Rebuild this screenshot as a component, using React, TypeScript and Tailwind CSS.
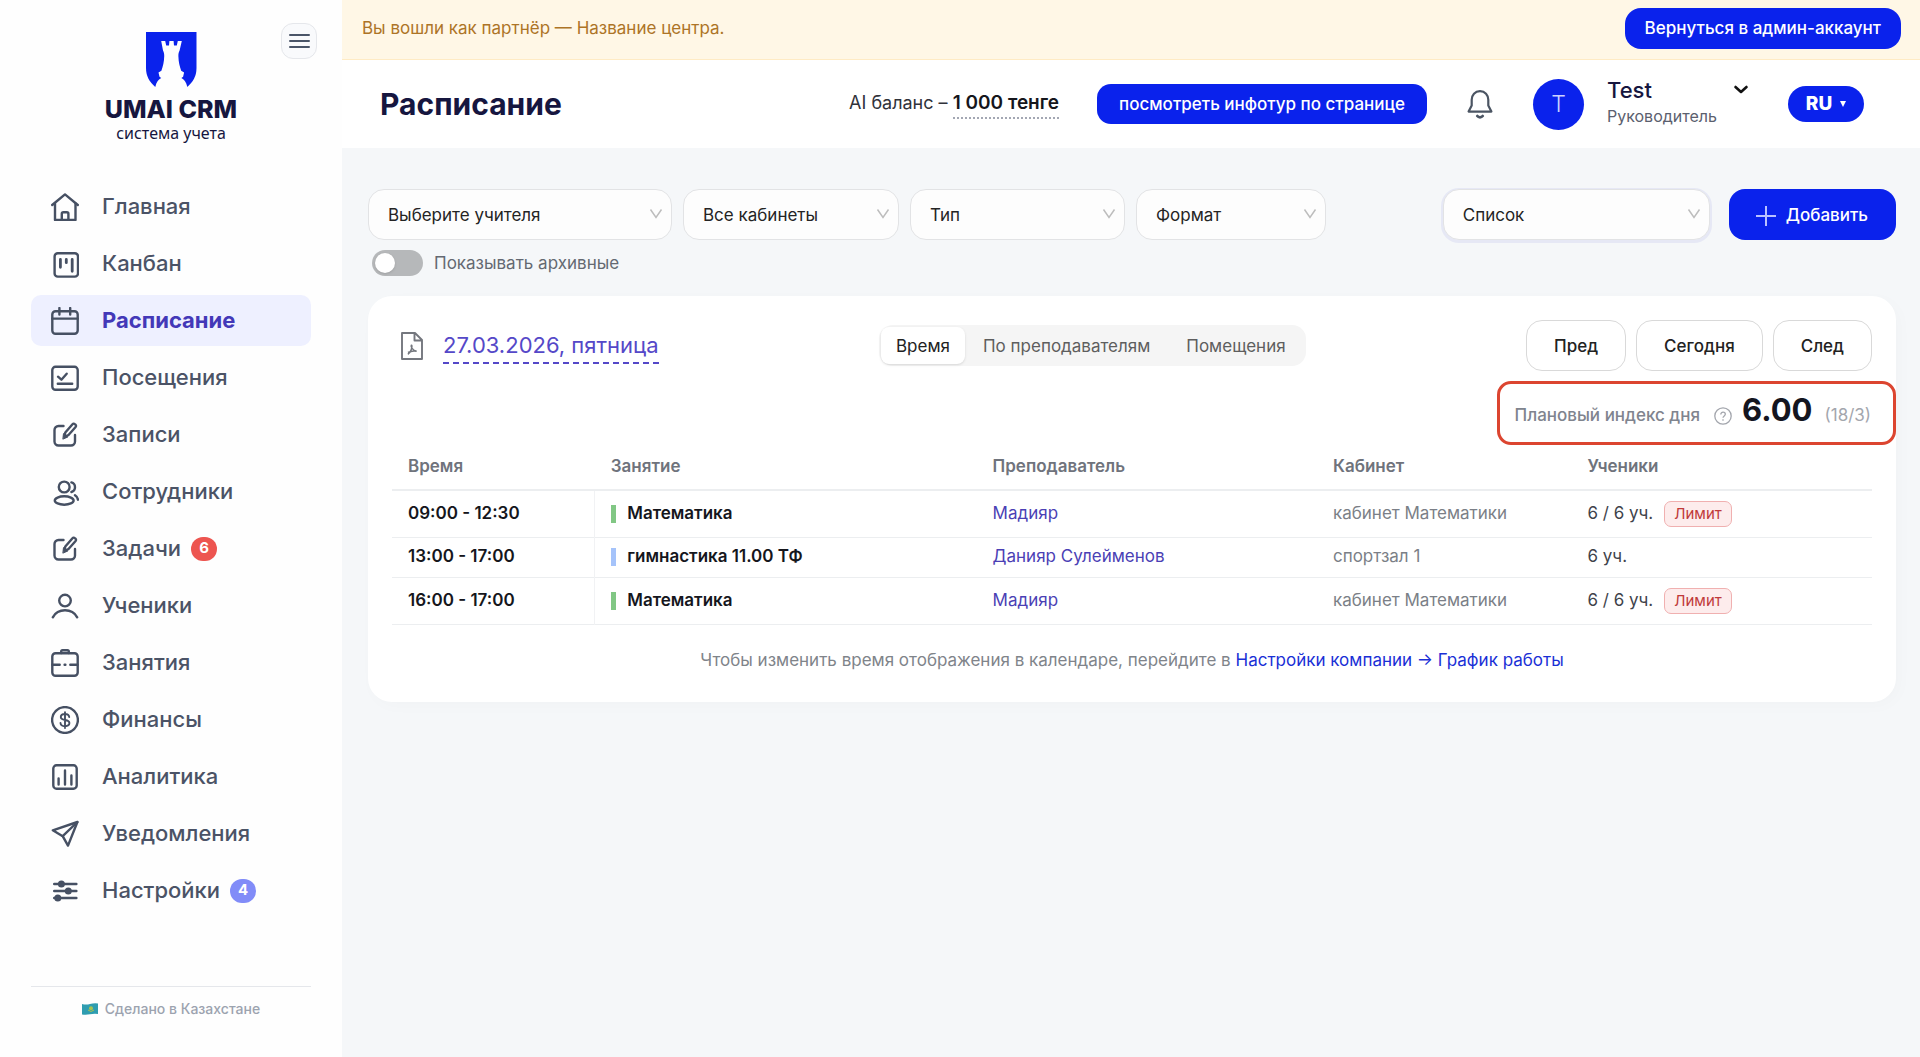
import { useState, type ReactNode } from "react";
import clsx from "clsx";

interface NavItem {
  label: string;
  icon: ReactNode;
  badge?: number;
  badgeClass?: string;
}

interface Lesson {
  time: string;
  title: string;
  color: string;
  teacher: string;
  room: string;
  students: string;
  limit: boolean;
}

const editIcon = (
  <>
    <path d="M12.5 5H7.5a4 4 0 0 0-4 4v11.5a4 4 0 0 0 4 4H20a4 4 0 0 0 4-4V14" />
    <path d="m13.3 15.8 1-4.3 7.2-8.3a1.6 1.6 0 0 1 2.3-.1l.7.6a1.6 1.6 0 0 1 .1 2.3l-7.3 8.2Z" />
    <path d="m12.8 12.8 4 3.2-4.6 2Z" fill="currentColor" strokeWidth="1" />
  </>
);

const navItems: NavItem[] = [
  {
    label: "Главная",
    icon: (
      <>
        <path d="M1.2 12 14 1.4 26.8 12" />
        <path d="M4 10.5V27h20.5V10.5" />
        <path d="M10.8 27v-6.2a1.6 1.6 0 0 1 1.6-1.6h3.4a1.6 1.6 0 0 1 1.6 1.6V27" />
      </>
    ),
  },
  {
    label: "Канбан",
    icon: (
      <>
        <rect x="3.6" y="3.2" width="23.4" height="23.4" rx="3.2" />
        <path d="M9.4 9.5v7.8M15.3 9.5v3.2M21.2 9.5v11.8" strokeWidth="2.8" />
      </>
    ),
  },
  {
    label: "Расписание",
    icon: (
      <>
        <rect x="1.3" y="4.2" width="25.4" height="22.6" rx="3.2" />
        <path d="M1.3 11.6h25.4M8.4 1v6.5M19.2 1v6.5" />
      </>
    ),
  },
  {
    label: "Посещения",
    icon: (
      <>
        <rect x="1.3" y="2.8" width="25.4" height="23" rx="3.2" />
        <path d="m7 12.7 3.4 3 5.3-6M6.8 19.8h14.4" />
      </>
    ),
  },
  { label: "Записи", icon: editIcon },
  {
    label: "Сотрудники",
    icon: (
      <>
        <circle cx="13.2" cy="9" r="5.4" />
        <ellipse cx="13.2" cy="22.5" rx="9.4" ry="4.2" />
        <path d="M20.4 4.4a5 5 0 0 1 0 9.6M24 17.2c2 1.3 2.8 2.6 2.9 4.5" />
      </>
    ),
  },
  { label: "Задачи", icon: editIcon, badge: 6, badgeClass: "bg-[#ed5550]" },
  {
    label: "Ученики",
    icon: (
      <>
        <circle cx="14" cy="8.6" r="5.8" />
        <path d="M1.8 25.3c2.6-4.7 7-7 12.2-7s9.6 2.3 12.2 7" />
      </>
    ),
  },
  {
    label: "Занятия",
    icon: (
      <>
        <rect x="1.3" y="4.2" width="25.4" height="22.6" rx="3.2" />
        <path d="M10.2 4V2.5c0-.8.5-1.3 1.3-1.3h5c.8 0 1.3.5 1.3 1.3V4" />
        <path d="M1.5 15.8h7.2M13.6 15.8h.8M19.3 15.8h7.2" />
      </>
    ),
  },
  {
    label: "Финансы",
    icon: (
      <>
        <circle cx="14" cy="14" r="12.9" />
        <path
          d="M18.2 11c-.2-1.9-1.8-3-4.2-3s-4.2 1.1-4.2 3c0 1.8 1.4 2.5 4.2 3s4.4 1.3 4.4 3.1c0 1.9-1.8 3.1-4.4 3.1s-4.4-1.2-4.5-3.2M14 6.2v15.8"
          strokeWidth="1.9"
        />
      </>
    ),
  },
  {
    label: "Аналитика",
    icon: (
      <>
        <rect x="2.3" y="2.3" width="23.4" height="23.4" rx="3.2" />
        <path d="M7.6 15.5v6M14 7.5v14M20.4 12.5v9" />
      </>
    ),
  },
  {
    label: "Уведомления",
    icon: (
      <>
        <path d="M26.4 2 1.8 10.3l9.9 5.9L17 25.6Z" />
        <path d="M26.4 2 11.7 16.2" />
      </>
    ),
  },
  {
    label: "Настройки",
    badge: 4,
    badgeClass: "bg-[#818cf8]",
    icon: (
      <>
        <path d="M3.2 7h22.2M3.2 14h22.2M3.2 21h22.2" />
        <g fill="currentColor" stroke="none">
          <circle cx="10.4" cy="7" r="3.5" />
          <circle cx="17.3" cy="14" r="3.5" />
          <circle cx="6.8" cy="21" r="3.5" />
        </g>
      </>
    ),
  },
];

const lessons: Lesson[] = [
  {
    time: "09:00 - 12:30",
    title: "Математика",
    color: "bg-[#81c784]",
    teacher: "Мадияр",
    room: "кабинет Математики",
    students: "6 / 6 уч.",
    limit: true,
  },
  {
    time: "13:00 - 17:00",
    title: "гимнастика 11.00 ТФ",
    color: "bg-[#a5c3fa]",
    teacher: "Данияр Сулейменов",
    room: "спортзал 1",
    students: "6 уч.",
    limit: false,
  },
  {
    time: "16:00 - 17:00",
    title: "Математика",
    color: "bg-[#81c784]",
    teacher: "Мадияр",
    room: "кабинет Математики",
    students: "6 / 6 уч.",
    limit: true,
  },
];

const views = ["Время", "По преподавателям", "Помещения"];

function Logo() {
  return (
    <div className="flex flex-col items-center text-[#16163f]">
      <svg width="51" height="55" viewBox="0 0 51 55" aria-hidden="true">
        <path d="M0 0h50.5v36c0 8-3.5 14-9.3 19H9.3C3.5 50 0 44 0 36Z" fill="#0a22ec" />
        <path
          d="M15.2 9h4l1 4.6h2.8l.4-4.6h4.2l.4 4.6h2.8l1-4.6h4l-2.2 9.5c-1 2-1.3 3.5-1.2 6 .2 5.5 1.2 9.6 2.8 14.3l2.9 1.7-1 4.2-1.7 1.3c2.6 1.2 4.8 4 6 9.2H9.2c1.2-5.2 3.4-8 6-9.2l-1.7-1.3-1-4.2 2.9-1.7c1.6-4.7 2.6-8.8 2.8-14.3.1-2.5-.2-4-1.2-6Z"
          fill="#fefefe"
        />
      </svg>
      <span className="mt-[10px] text-[25px] leading-6 font-extrabold whitespace-nowrap">UMAI CRM</span>
      <span className="font-['Noto_Sans',sans-serif] text-[16px] leading-6">система учета</span>
    </div>
  );
}

function Sidebar() {
  return (
    <aside className="flex w-[342px] shrink-0 flex-col bg-[#fefefe] px-[25px] pb-[38px]">
      <div className="grid grid-cols-[1fr_auto_1fr] items-start">
        <span />
        <div className="pt-8">
          <Logo />
        </div>
        <button
          type="button"
          aria-label="Меню"
          className="mt-[23px] flex h-9 w-9 items-center justify-center justify-self-end rounded-xl border border-gray-200 bg-[#f9fafc] text-[#4a5568]"
        >
          <svg width="21" height="16" viewBox="0 0 21 16" stroke="currentColor" strokeWidth="2" strokeLinecap="round">
            <path d="M1 2h19M1 8h19M1 14h19" />
          </svg>
        </button>
      </div>

      <nav className="mt-9 flex flex-col gap-[6px] px-[6px]">
        {navItems.map((item) => {
          const active = item.label === "Расписание";
          return (
            <a
              key={item.label}
              href="#"
              className={clsx(
                "flex h-[51px] items-center rounded-[10px] pl-5 text-[22px]",
                active ? "bg-[#eef0ff] font-bold text-[#4338b8]" : "font-medium text-[#4b5366]"
              )}
            >
              <svg
                width="28"
                height="28"
                viewBox="0 0 28 28"
                fill="none"
                stroke="currentColor"
                strokeWidth="2.4"
                strokeLinecap="round"
                strokeLinejoin="round"
                className="mr-[23px] shrink-0 text-[#465063]"
                aria-hidden="true"
              >
                {item.icon}
              </svg>
              {item.label}
              {item.badge && (
                <span
                  className={clsx(
                    "ml-[10px] flex h-6 w-[26px] items-center justify-center rounded-full text-[15px] font-bold text-white",
                    item.badgeClass
                  )}
                >
                  {item.badge}
                </span>
              )}
            </a>
          );
        })}
      </nav>

      <div className="mx-[6px] mt-auto flex items-center justify-center gap-[7px] border-t border-gray-200 pt-3 text-[14px] leading-5 font-medium text-[#9ca3af]">
        <svg width="16" height="12" viewBox="0 0 16 12" aria-hidden="true">
          <path d="M0 1q4 1 8 0t8-.5v10.5q-4-.5-8 .3T0 11.5Z" fill="#2f9db0" />
          <circle cx="9" cy="5.3" r="2" fill="#a8c34f" />
          <path d="M6 7q3 3 6 0" fill="none" stroke="#a8c34f" />
        </svg>
        Сделано в Казахстане
      </div>
    </aside>
  );
}

function FilterSelect({ label, className }: { label: string; className: string }) {
  return (
    <div className="relative">
      <select
        aria-label={label}
        className={clsx(
          "h-[51px] appearance-none rounded-2xl border border-[#e2e3e5] bg-[#fdfdfd] pt-[2px] pl-[19px] text-[17px] text-[#242424] outline-none",
          className
        )}
      >
        <option>{label}</option>
      </select>
      <svg
        width="14"
        height="12"
        viewBox="0 0 14 12"
        fill="none"
        stroke="#bdbdbd"
        strokeWidth="1.5"
        className="pointer-events-none absolute top-[19px] right-[9px]"
        aria-hidden="true"
      >
        <path d="M1.5 1.5 7 9.5l5.5-8" />
      </svg>
    </div>
  );
}

function Header() {
  return (
    <header className="flex h-[88px] items-center bg-white pr-14 pl-[38px]">
      <h1 className="text-[30px] font-bold text-[#16163f]">Расписание</h1>

      <div className="ml-auto flex items-center">
        <p className="text-[18px] text-[#30323a]">
          AI баланс –{" "}
          <a href="#" className="inline-block border-b-2 border-dotted border-[#a3a7b3] text-[19px] font-semibold text-[#15161c]">
            1 000 тенге
          </a>
        </p>
        <button type="button" className="ml-[38px] h-10 rounded-[14px] bg-[#0a22ec] px-[22px] pt-[2px] text-[17px] font-medium text-white">
          посмотреть инфотур по странице
        </button>
        <button type="button" aria-label="Уведомления" className="ml-[39px] text-[#4b5563]">
          <svg width="28" height="30" viewBox="0 0 28 30" fill="none" stroke="currentColor" strokeWidth="2.2" strokeLinecap="round" strokeLinejoin="round">
            <path d="M14 2.2c-5 0-8.3 3.7-8.3 8.6v5.7L2.6 22.6h22.8l-3.1-6.1v-5.7c0-4.9-3.3-8.6-8.3-8.6Z" />
            <path d="M11.3 27c1.3 1.7 4.1 1.7 5.4 0" strokeWidth="2.8" />
          </svg>
        </button>
        <div className="ml-[39px] flex h-[51px] w-[51px] items-center justify-center rounded-full bg-[#0a22ec] text-[23px] font-light text-[#ccd2ff]">
          T
        </div>
        <button type="button" className="mb-1 ml-[23px] grid w-[142px] grid-cols-[1fr_auto] items-center text-left">
          <span className="text-[22px] leading-7 font-medium text-[#16163f]">Test</span>
          <svg width="16" height="10" viewBox="0 0 16 10" fill="none" stroke="#111" strokeWidth="2.6" strokeLinecap="round" strokeLinejoin="round" aria-hidden="true">
            <path d="m2.5 2 5.5 5 5.5-5" />
          </svg>
          <span className="text-[16px] leading-6 text-[#5b606e]">Руководитель</span>
        </button>
        <button type="button" className="ml-[39px] flex h-9 w-[76px] items-center justify-center gap-2 rounded-full bg-[#0a22ec] text-[19px] font-extrabold text-white">
          RU
          <svg width="6" height="6" viewBox="0 0 6 6" fill="currentColor" aria-hidden="true">
            <path d="M0 0h6L3 6Z" />
          </svg>
        </button>
      </div>
    </header>
  );
}

function LessonTable() {
  return (
    <table className="w-full table-fixed border-collapse text-left text-[17px]">
      <thead>
        <tr className="h-[45px] border-b-2 border-[#eceef0] text-[#6f737c]">
          <th className="w-[13.7%] px-4 font-semibold">Время</th>
          <th className="w-[25.8%] px-4 font-semibold">Занятие</th>
          <th className="w-[23%] px-4 font-semibold">Преподаватель</th>
          <th className="w-[17.2%] px-4 font-semibold">Кабинет</th>
          <th className="px-4 font-semibold">Ученики</th>
        </tr>
      </thead>
      <tbody>
        {lessons.map((lesson) => (
          <tr
            key={lesson.time}
            className={clsx("border-b border-[#eceef0]", lesson.limit ? "h-[47px]" : "h-10")}
          >
            <td className="border-r border-[#f1f2f4] px-4 font-semibold text-[#15161c]">{lesson.time}</td>
            <td className="px-4 font-semibold text-[#15161c]">
              <div className="flex items-center gap-[11px]">
                <span className={clsx("h-[18px] w-[5px]", lesson.color)} />
                {lesson.title}
              </div>
            </td>
            <td className="px-4">
              <a href="#" className="text-[#4b3fb5]">{lesson.teacher}</a>
            </td>
            <td className="px-4 text-[#7b7f87]">{lesson.room}</td>
            <td className="px-4 text-[#40434b]">
              <div className="flex items-center gap-[11px]">
                {lesson.students}
                {lesson.limit && (
                  <span className="rounded-[7px] border border-[#f0b0b0] bg-[#fdecec] px-[9px] text-[15px] leading-6 text-[#c03a3a]">
                    Лимит
                  </span>
                )}
              </div>
            </td>
          </tr>
        ))}
      </tbody>
    </table>
  );
}

export default function App() {
  const [view, setView] = useState(views[0]);

  return (
    <div className="flex min-h-screen bg-[#f5f7f9] font-['Inter',sans-serif]">
      <Sidebar />

      <div className="flex min-w-0 flex-1 flex-col">
        {/* Partner banner */}
        <div className="flex h-[60px] items-center justify-between border-b border-[#ffebc4] bg-[#fff7e6] pr-[19px] pb-[3px] pl-5">
          <p className="pt-[2px] text-[17px] text-[#ad7426]">Вы вошли как партнёр — Название центра.</p>
          <button type="button" className="h-[41px] rounded-2xl bg-[#0a22ec] px-5 pt-[2px] text-[17px] font-medium text-white">
            Вернуться в админ-аккаунт
          </button>
        </div>

        <Header />

        <main className="pt-[41px] pr-6 pl-[26px]">
          {/* Filters */}
          <div className="flex items-center gap-[11px]">
            <FilterSelect label="Выберите учителя" className="w-[304px]" />
            <FilterSelect label="Все кабинеты" className="w-[216px]" />
            <FilterSelect label="Тип" className="w-[215px]" />
            <FilterSelect label="Формат" className="w-[190px]" />
            <div className="ml-auto flex items-center gap-[19px]">
              <FilterSelect label="Список" className="w-[267px] shadow-[0_1px_0_2px_#e6e8f5]" />
              <button type="button" className="flex h-[51px] items-center gap-[10px] rounded-2xl bg-[#0a22ec] pt-[2px] pr-7 pl-[27px] text-[17px] font-medium text-white">
                <svg width="20" height="20" viewBox="0 0 20 20" stroke="#b9c1ff" strokeWidth="2" aria-hidden="true">
                  <path d="M10 0v20M0 10h20" />
                </svg>
                Добавить
              </button>
            </div>
          </div>

          <label className="mt-[10px] flex w-fit items-center gap-[11px] pl-1 text-[17px] leading-[26px] text-[#646972]">
            <input
              type="checkbox"
              className="h-[26px] w-[51px] appearance-none rounded-full bg-[#b6b8ba] p-[3px] before:block before:h-5 before:w-5 before:rounded-full before:bg-white before:shadow checked:bg-[#0a22ec] checked:before:ml-6"
            />
            Показывать архивные
          </label>

          {/* Schedule card */}
          <section className="mt-5 rounded-3xl bg-white px-6 pt-6 pb-[29px] shadow-[4px_4px_16px_rgba(0,0,0,0.02)]">
            <div className="flex items-center justify-between">
              <div className="flex items-center gap-5 pl-[9px]">
                <svg width="22" height="28" viewBox="0 0 22 28" fill="none" stroke="#74777e" strokeWidth="1.9" strokeLinejoin="round" aria-hidden="true">
                  <path d="M1 1h13l7 7v19H1ZM13.5 1v7.5H21" />
                  <path d="M10.3 13c.9 0 .7 2.6-.1 4.8-.8 2.2-2.2 4-3.4 4.5M10.3 13c-.6 1.6 1 5.2 5.3 6.3M7 20.5c2.6-1.4 5.5-2 8.7-1.3" strokeWidth="1.5" />
                </svg>
                <a href="#" className="border-b-2 border-dashed border-[#5548c8] text-[22px] leading-[34px] text-[#5548c8]">
                  27.03.2026, пятница
                </a>
              </div>

              <div className="flex rounded-[14px] bg-[#f5f5f5] p-[2px] text-[17px] text-[#5e5e5e]">
                {views.map((name) => (
                  <button
                    key={name}
                    type="button"
                    onClick={() => setView(name)}
                    className={clsx(
                      "h-[37px] rounded-lg pt-[2px]",
                      view === name ? "bg-white px-[15px] text-[#222] shadow-sm" : "px-[18px]"
                    )}
                  >
                    {name}
                  </button>
                ))}
              </div>

              <div className="flex gap-[10px] text-[17px] font-medium text-[#222]">
                {["Пред", "Сегодня", "След"].map((name) => (
                  <button key={name} type="button" className="h-[51px] rounded-2xl border border-[#d9d9d9] bg-white px-[27px] pt-[2px]">
                    {name}
                  </button>
                ))}
              </div>
            </div>

            <div className="mt-[10px] -mr-6 ml-auto flex h-16 w-fit items-center rounded-[14px] border-3 border-[#dc4530] pr-[22px] pb-[6px] pl-[15px]">
              <div className="flex items-baseline">
                <span className="text-[17px] font-medium text-[#80848e]">Плановый индекс дня</span>
                <svg width="18" height="18" viewBox="0 0 18 18" fill="none" stroke="#a3a6ad" strokeWidth="1.3" className="mb-[3px] ml-[14px] self-end" aria-hidden="true">
                  <circle cx="9" cy="9" r="8.2" />
                  <path d="M6.8 7.4c0-3 4.5-2.8 4.5-.2 0 1.7-2.3 1.7-2.3 3.6M9 12.2v1.5" />
                </svg>
                <strong className="ml-[10px] text-[31px] leading-9 font-bold text-[#14151f]">6.00</strong>
                <span className="ml-3 text-[17px] text-[#a3a6ad]">(18/3)</span>
              </div>
            </div>

            <LessonTable />

            <p className="mt-[22px] text-center text-[17px] leading-[26px] text-[#80848a]">
              Чтобы изменить время отображения в календаре, перейдите в{" "}
              <a href="#" className="text-[#1a2fd6]">Настройки компании → График работы</a>
            </p>
          </section>
        </main>
      </div>
    </div>
  );
}
